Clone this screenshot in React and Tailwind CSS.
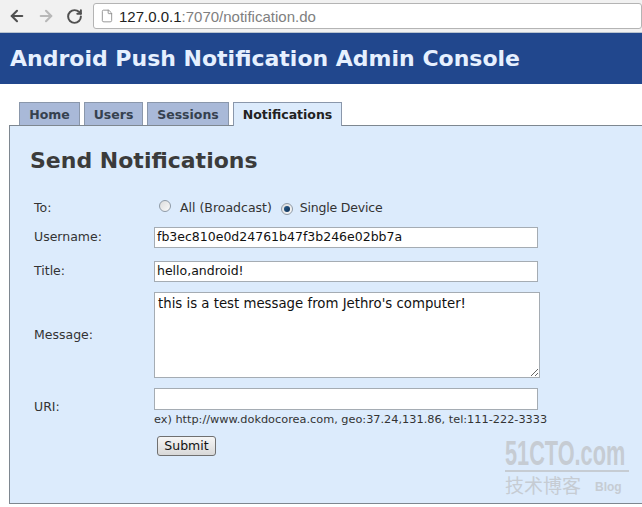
import React from "react";
import { ArrowLeft, ArrowRight, RotateCw, File } from "lucide-react";

const ff = { fontFamily: '"DejaVu Sans", Verdana, sans-serif' };

function Radio({ checked }) {
  return (
    <span className="inline-flex h-[12px] w-[12px] items-center justify-center rounded-full border border-[#8f9aa6] bg-gradient-to-br from-[#dcdcdc] to-[#fafafa]">
      {checked && <span className="h-[6px] w-[6px] rounded-full bg-gradient-to-br from-[#2a5d8c] to-[#0d2f55]" />}
    </span>
  );
}

export default function App() {
  return (
    <div className="relative h-[507px] w-[642px] overflow-hidden bg-white" style={ff}>
      {/* browser toolbar */}
      <div className="flex h-[33px] items-center border-b border-[#b9c4cf] bg-[#f1f1f1]">
        <ArrowLeft className="ml-[8px] h-[18px] w-[18px] text-[#505050]" strokeWidth={2.8} />
        <ArrowRight className="ml-[11px] h-[18px] w-[18px] text-[#b8b8b8]" strokeWidth={2.8} />
        <RotateCw className="ml-[11px] h-[17px] w-[17px] text-[#505050]" strokeWidth={2.8} />
        <div className="ml-[10px] flex h-[26px] flex-1 items-center rounded-[3px] border border-[#b4b4b4] bg-white">
          <File className="ml-[6px] h-[14px] w-[14px] text-[#8a8a8a]" strokeWidth={1.5} />
          <span className="ml-[5px] text-[15px] leading-none" style={{ fontFamily: '"Liberation Sans", Arial, sans-serif' }}>
            <span className="text-[#222]">127.0.0.1</span>
            <span className="text-[#808080]">:7070/notification.do</span>
          </span>
        </div>
      </div>

      {/* header */}
      <div className="flex h-[51px] items-center bg-[#21478d] pl-[10px]">
        <span className="text-[22px] font-bold text-[#e6f0ff]">Android Push Notification Admin Console</span>
      </div>

      {/* tabs */}
      <div className="mt-[18px] flex h-[23px] items-end gap-[4px] pl-[19px] text-[12.5px] font-bold text-[#36414f]">
        <div className="flex h-[23px] w-[61px] shrink-0 items-center justify-center border border-b-0 border-[#8a97ab] bg-[#a9b9d8] pt-[2px]">Home</div>
        <div className="flex h-[23px] w-[59px] shrink-0 items-center justify-center border border-b-0 border-[#8a97ab] bg-[#a9b9d8] pt-[2px]">Users</div>
        <div className="flex h-[23px] w-[82px] shrink-0 items-center justify-center border border-b-0 border-[#8a97ab] bg-[#a9b9d8] pt-[2px]">Sessions</div>
        <div className="relative z-10 mb-[-1px] flex h-[24px] w-[109px] shrink-0 items-center justify-center border border-b-0 border-[#8a97ab] bg-[#dcebfc] pt-[1px] text-[#222]">Notifications</div>
      </div>

      {/* panel */}
      <div className="ml-[9px] h-[379px] w-[660px] border border-[#7e8790] bg-[#dcebfc] pl-[20px] pt-[22px] text-[12.5px] text-[#333]">
        <div className="h-[26px] text-[22px] font-bold leading-[26px] text-[#3b3b3b]">Send Notifications</div>

        <div className="ml-[4px]">
          <div className="mt-[25px] flex h-[18px] items-center">
            <div className="w-[120px]">To:</div>
            <div className="flex items-center">
              <span className="ml-[5px]"><Radio /></span>
              <span className="ml-[9px] leading-none">All (Broadcast)</span>
              <span className="ml-[9px]"><Radio checked /></span>
              <span className="ml-[7px] leading-none tracking-[-0.2px]">Single Device</span>
            </div>
          </div>

          <div className="mt-[10px] flex items-center">
            <div className="w-[120px]">Username:</div>
            <div className="flex h-[21px] w-[384px] items-center border border-[#a5acb3] bg-white pl-[2px] text-[#111]">fb3ec810e0d24761b47f3b246e02bb7a</div>
          </div>

          <div className="mt-[13px] flex items-center">
            <div className="w-[120px]">Title:</div>
            <div className="flex h-[21px] w-[384px] items-center border border-[#a5acb3] bg-white pl-[2px] text-[#111]">hello,android!</div>
          </div>

          <div className="mt-[10px] flex items-center">
            <div className="w-[120px]">Message:</div>
            <textarea
              readOnly
              value="this is a test message from Jethro's computer!"
              className="block h-[86px] w-[386px] resize border border-[#a5acb3] bg-white px-[3px] pt-[3px] text-[13.3px] leading-[16px] text-[#111] outline-none"
              style={ff}
            />
          </div>

          <div className="mt-[10px] flex items-start">
            <div className="w-[120px] pt-[10px]">URI:</div>
            <div className="flex flex-col">
              <div className="h-[22px] w-[384px] border border-[#a5acb3] bg-white" />
              <div className="mt-[3px] text-[11.3px] leading-[13px] text-[#333]">ex) http://www.dokdocorea.com, geo:37.24,131.86, tel:111-222-3333</div>
              <div className="ml-[3px] mt-[10px] flex h-[20px] w-[59px] items-center justify-center rounded-[3px] border border-[#707070] bg-gradient-to-b from-[#f6f6f6] to-[#d8d8d8] text-[12.5px] text-[#111]">Submit</div>
            </div>
          </div>
        </div>
      </div>

      {/* watermark */}
      <div className="pointer-events-none absolute left-[505px] top-[437px] flex w-[124px] flex-col items-start text-[#c6ccd3]">
        <div className="h-[32px] w-[124px] overflow-visible">
          <div className="origin-left scale-x-[0.62] whitespace-nowrap text-[35px] font-bold leading-[32px]" style={{ fontFamily: '"Liberation Sans", sans-serif' }}>51CTO.com</div>
        </div>
        <div className="mt-[1px] h-[2px] w-[124px] bg-[#c6ccd3]" />
        <div className="mt-[2px] flex items-end">
          <span className="text-[19px] leading-[22px]" style={{ fontFamily: '"Noto Sans CJK SC", sans-serif' }}>技术博客</span>
          <span className="ml-[14px] text-[12px] font-bold leading-[18px]" style={{ fontFamily: '"Liberation Sans", sans-serif' }}>Blog</span>
        </div>
      </div>
    </div>
  );
}
